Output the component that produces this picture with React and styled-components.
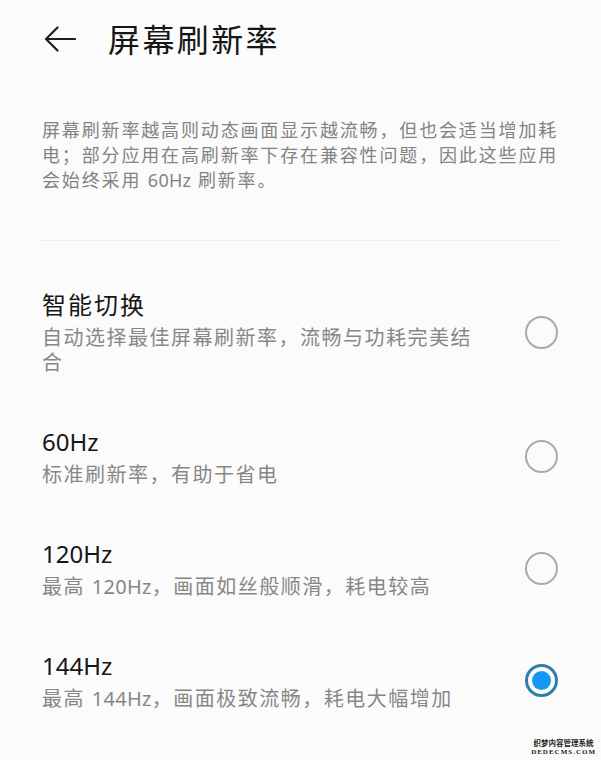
import React, { useState } from 'react';
import styled, { createGlobalStyle } from 'styled-components';

const GlobalStyle = createGlobalStyle`
  html, body {
    margin: 0;
    padding: 0;
    background: #fbfbfb;
  }
  body {
    font-family: "Noto Sans", "Noto Sans CJK SC", sans-serif;
    -webkit-font-smoothing: antialiased;
  }
`;

const Screen = styled.div`
  position: relative;
  width: 601px;
  height: 760px;
  overflow: hidden;
  background: #fbfbfb;
`;

const Header = styled.div`
  display: flex;
  align-items: center;
  height: 80px;
  padding-left: 44px;
`;

const BackButton = styled.button`
  display: flex;
  align-items: center;
  padding: 0;
  border: none;
  background: none;
  margin-top: -3px;
  cursor: pointer;
`;

const Title = styled.h1`
  margin: 0 0 0 32px;
  font-size: 32px;
  font-weight: 400;
  letter-spacing: 2.4px;
  color: #161616;
  line-height: 40px;
`;

const Description = styled.p`
  margin: 38px 42px 0;
  font-size: 18px;
  line-height: 25px;
  letter-spacing: 1.85px;
  color: #838383;
`;

const Latin = styled.span`
  letter-spacing: 0.3px;
`;

const Divider = styled.div`
  height: 1px;
  margin: 47px 42px 0;
  background: #ececec;
`;

const List = styled.div`
  display: flex;
  flex-direction: column;
  gap: 51px;
  padding: 48px 42px 0;
`;

const Row = styled.label`
  display: flex;
  align-items: center;
  justify-content: space-between;
  cursor: pointer;
`;

const Texts = styled.div`
  display: flex;
  flex-direction: column;
  gap: 4px;
  max-width: 445px;
`;

const RowTitle = styled.div`
  font-size: 24px;
  line-height: 32px;
  color: #161616;
  letter-spacing: ${(p) => (p.$cjk ? '2px' : '0')};
`;

const RowSub = styled.div`
  font-size: 20px;
  line-height: 25px;
  letter-spacing: 1.5px;
  color: #878787;
`;

const Radio = styled.span`
  flex-shrink: 0;
  display: flex;
  align-items: center;
  justify-content: center;
  box-sizing: border-box;
  width: 33px;
  height: 33px;
  margin-right: 1px;
  border-radius: 50%;
  border: ${(p) => (p.$on ? '3px solid #2f7fa9' : '2px solid #aaaaaa')};
  &::after {
    content: '';
    display: ${(p) => (p.$on ? 'block' : 'none')};
    width: 19px;
    height: 19px;
    border-radius: 50%;
    background: #1597f2;
  }
`;

const Watermark = styled.div`
  position: absolute;
  right: 5px;
  bottom: 3px;
  display: flex;
  flex-direction: column;
  align-items: center;
  font-family: "Liberation Serif", "Noto Sans CJK SC", serif;
  font-weight: 700;
  color: #222;
  line-height: 9px;
`;

const WmCn = styled.span`
  font-size: 7.5px;
`;

const WmEn = styled.span`
  font-size: 7px;
  letter-spacing: 1px;
`;

const options = [
  { id: 'auto', title: '智能切换', cjk: true, sub: ['自动选择最佳屏幕刷新率，流畅与功耗完美结合'] },
  { id: '60', title: '60Hz', sub: ['标准刷新率，有助于省电'] },
  { id: '120', title: '120Hz', sub: ['最高 ', '120Hz', '，画面如丝般顺滑，耗电较高'] },
  { id: '144', title: '144Hz', sub: ['最高 ', '144Hz', '，画面极致流畅，耗电大幅增加'] },
];

export default function App() {
  const [selected, setSelected] = useState('144');

  return (
    <Screen>
      <GlobalStyle />
      <Header>
        <BackButton aria-label="返回">
          <svg width="32" height="26" viewBox="0 0 32 26" fill="none">
            <path d="M31 13H2M13.5 1.5L2 13l11.5 11.5" stroke="#1e1e1e" strokeWidth="2.2" strokeLinecap="round" strokeLinejoin="round" />
          </svg>
        </BackButton>
        <Title>屏幕刷新率</Title>
      </Header>

      <Description>
        屏幕刷新率越高则动态画面显示越流畅，但也会适当增加耗电；部分应用在高刷新率下存在兼容性问题，因此这些应用会始终采用 <Latin>60Hz</Latin> 刷新率。
      </Description>

      <Divider />

      <List>
        {options.map((o) => (
          <Row key={o.id} onClick={() => setSelected(o.id)}>
            <Texts>
              <RowTitle $cjk={o.cjk}>{o.title}</RowTitle>
              <RowSub>
                {o.sub.map((part, i) => (i === 1 ? <Latin key={i}>{part}</Latin> : part))}
              </RowSub>
            </Texts>
            <Radio $on={selected === o.id} />
          </Row>
        ))}
      </List>

      <Watermark>
        <WmCn>织梦内容管理系统</WmCn>
        <WmEn>DEDECMS.COM</WmEn>
      </Watermark>
    </Screen>
  );
}
